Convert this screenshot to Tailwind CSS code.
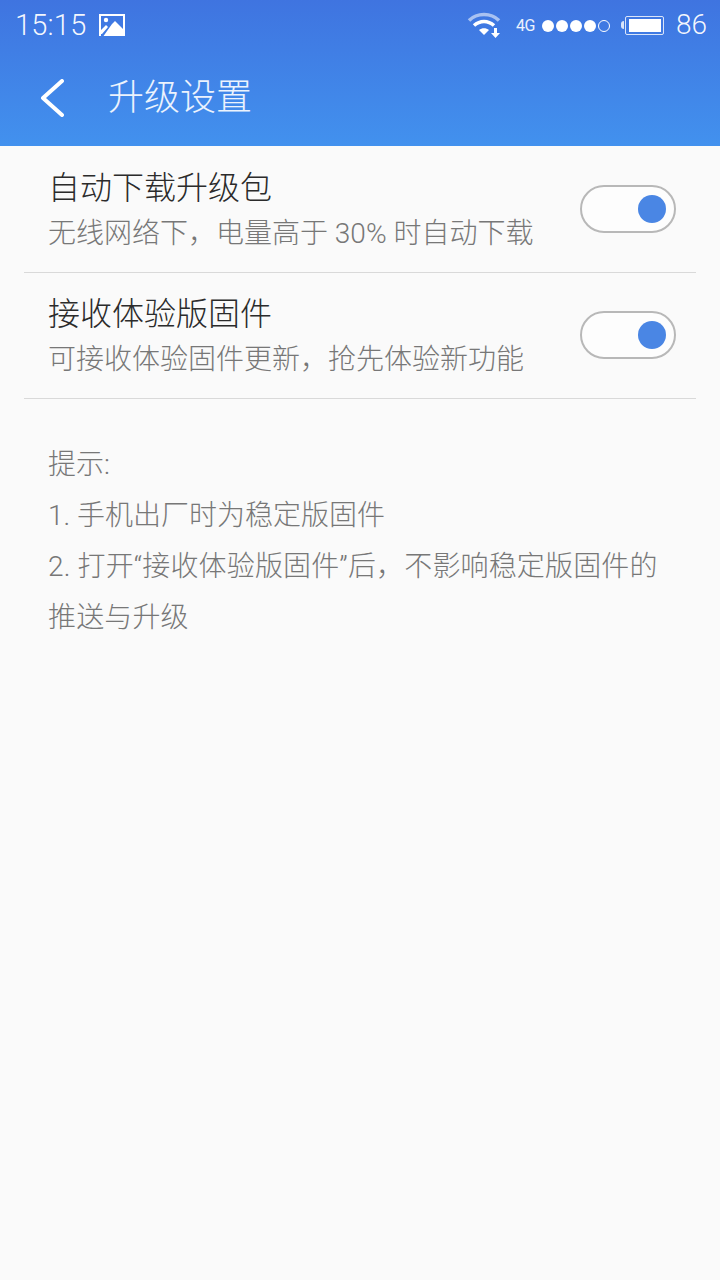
<!DOCTYPE html>
<html lang="zh-CN">
<head>
<meta charset="UTF-8">
<title>升级设置</title>
<script src="https://cdn.jsdelivr.net/npm/@tailwindcss/browser@4"></script>
</head>
<body class="w-[720px] h-[1280px] bg-[#fafafa] overflow-hidden font-['Roboto','Noto_Sans_CJK_SC',sans-serif]">
  <!-- header -->
  <header class="h-[146px] bg-gradient-to-b from-[#3f74e0] to-[#4291ee] text-white">
    <div class="h-[50px] flex items-center pl-[15px] pr-[13px]">
      <span class="text-[29px] font-light leading-none tracking-[0.2px] text-white/95">15:15</span>
      <svg class="ml-[13px]" width="26" height="22" viewBox="0 0 26 22"><path fill="#fff" fill-rule="evenodd" d="M0 0h26v22H0z M2 2v14l5-5 2 2 -6 7h-1v2h2.500L13 10l3-3 8 8V2z"/><circle cx="7" cy="6" r="2.200" fill="#fff"/></svg>
      <div class="ml-auto flex items-center">
        <svg class="-ml-[3px]" width="36" height="28" viewBox="0 0 36 28"><path d="M2 9.500C10 1.500 24 1.500 32 9.500" fill="none" stroke="#fff" stroke-opacity=".55" stroke-width="3.500"/><path d="M7 14.500c6-5.500 14-5.500 20 0" fill="none" stroke="#fff" stroke-width="3.500"/><path d="M12 19c3-2.500 7-2.500 10 0l-5 5z" fill="#fff"/><path d="M27 17h3v5h3l-4.500 5-4.500-5h3z" fill="#fff"/></svg>
        <span class="ml-[13px] text-[16px] leading-none text-white/90 tracking-[-0.5px] mt-[2px]">4G</span>
        <div class="ml-[7px] flex items-center gap-[2px] mt-[1px]">
          <span class="w-[12px] h-[12px] rounded-full bg-white"></span>
          <span class="w-[12px] h-[12px] rounded-full bg-white"></span>
          <span class="w-[12px] h-[12px] rounded-full bg-white"></span>
          <span class="w-[12px] h-[12px] rounded-full bg-white"></span>
          <span class="w-[12px] h-[12px] rounded-full border border-white"></span>
        </div>
        <div class="ml-[11px] flex items-center">
          <span class="w-[3px] h-[8px] bg-white/80 rounded-l-sm"></span>
          <span class="ml-[1px] w-[39px] h-[19px] border border-white/80 rounded-[2px] p-[2px] flex justify-end"><span class="block w-[32px] h-full bg-white"></span></span>
        </div>
        <span class="ml-[12px] text-[28px] font-light leading-none text-white/95">86</span>
      </div>
    </div>
    <div class="h-[96px] flex items-center">
      <svg class="ml-[40px]" width="24" height="38" viewBox="0 0 24 38"><path d="M22 2 3 19l19 17" fill="none" stroke="#fff" stroke-width="4" stroke-linecap="round" stroke-linejoin="round"/></svg>
      <h1 class="ml-[44px] text-[36px] leading-none text-white/90 font-light">升级设置</h1>
    </div>
  </header>

  <!-- settings -->
  <section class="px-6">
    <div class="h-[127px] border-b border-[#d9d9d9] flex items-center pl-[24px] pr-[20px]">
      <div class="flex-1">
        <p class="text-[32px] leading-[44px] text-[#2b2b2b] font-light -mt-[1px]">自动下载升级包</p>
        <p class="text-[28px] leading-[36px] text-[#777] font-light mt-[6px]">无线网络下，电量高于 30% 时自动下载</p>
      </div>
      <div class="w-[96px] h-[48px] rounded-full border-2 border-[#b8b8b8] bg-[#fdfdfd] flex items-center justify-end pr-[8px]"><span class="w-[28px] h-[28px] rounded-full bg-[#4a86e4]"></span></div>
    </div>
    <div class="h-[126px] border-b border-[#d9d9d9] flex items-center pl-[24px] pr-[20px]">
      <div class="flex-1">
        <p class="text-[32px] leading-[44px] text-[#2b2b2b] font-light -mt-[1px]">接收体验版固件</p>
        <p class="text-[28px] leading-[36px] text-[#777] font-light mt-[6px]">可接收体验固件更新，抢先体验新功能</p>
      </div>
      <div class="w-[96px] h-[48px] -mt-[2px] rounded-full border-2 border-[#b8b8b8] bg-[#fdfdfd] flex items-center justify-end pr-[8px]"><span class="w-[28px] h-[28px] rounded-full bg-[#4a86e4]"></span></div>
    </div>
  </section>

  <!-- tips -->
  <section class="mt-[40px] pl-[48px] pr-[50px] text-[28px] leading-[51px] text-[#777] font-light">
    <p>提示:</p>
    <p>1. 手机出厂时为稳定版固件</p>
    <p class="tracking-[0.15px]">2. 打开“接收体验版固件”后，不影响稳定版固件的<br>推送与升级</p>
  </section>
</body>
</html>
